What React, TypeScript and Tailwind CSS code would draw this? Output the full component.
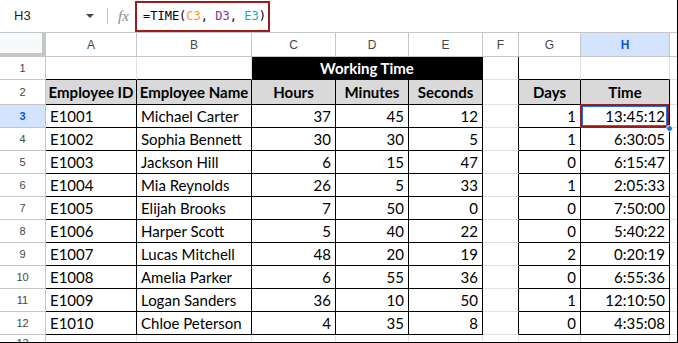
import React from "react";

const data: [string, string, number, number, number, number, string][] = [
  ["E1001", "Michael Carter", 37, 45, 12, 1, "13:45:12"],
  ["E1002", "Sophia Bennett", 30, 30, 5, 1, "6:30:05"],
  ["E1003", "Jackson Hill", 6, 15, 47, 0, "6:15:47"],
  ["E1004", "Mia Reynolds", 26, 5, 33, 1, "2:05:33"],
  ["E1005", "Elijah Brooks", 7, 50, 0, 0, "7:50:00"],
  ["E1006", "Harper Scott", 5, 40, 22, 0, "5:40:22"],
  ["E1007", "Lucas Mitchell", 48, 20, 19, 2, "0:20:19"],
  ["E1008", "Amelia Parker", 6, 55, 36, 0, "6:55:36"],
  ["E1009", "Logan Sanders", 36, 10, 50, 1, "12:10:50"],
  ["E1010", "Chloe Peterson", 4, 35, 8, 0, "4:35:08"],
];

const cols = ["A", "B", "C", "D", "E", "F", "G", "H", ""];

const G = "border-r border-b border-r-[#e1e1e1] border-b-[#e1e1e1]";
const BB = "border-r border-b border-r-black border-b-black";
const GB = "border-r border-b border-r-[#e1e1e1] border-b-black";
const BG = "border-r border-b border-r-black border-b-[#e1e1e1]";

function RowHead({ n, active }: { n: string; active?: boolean }) {
  return (
    <div
      className={
        "flex items-center justify-center border-r border-b border-[#c4c7c5] text-[11px] font-['Liberation_Sans',Arial,sans-serif] " +
        (active ? "bg-[#d3e3fd] text-[#0b57d0] font-bold" : "bg-white text-[#444746]")
      }
    >
      {n}
    </div>
  );
}

function Cell({
  b,
  children,
  align = "left",
  bold,
  bg,
}: {
  b: string;
  children?: React.ReactNode;
  align?: "left" | "right" | "center";
  bold?: boolean;
  bg?: string;
}) {
  const a = align === "right" ? "justify-end" : align === "center" ? "justify-center" : "justify-start";
  return (
    <div
      className={
        "flex items-center px-[4px] overflow-hidden whitespace-nowrap text-[15px] text-black font-['Lato',sans-serif] " +
        a +
        " " +
        b +
        " " +
        (bold ? "font-bold " : "") +
        (bg ?? "bg-white")
      }
    >
      {children}
    </div>
  );
}

export default function App() {
  return (
    <div className="w-[678px] h-[343px] bg-white border-r border-b border-black overflow-hidden flex flex-col">
      {/* formula bar */}
      <div className="h-[33px] shrink-0 flex items-center border-b border-[#c4c7c5] bg-white font-['Liberation_Sans',Arial,sans-serif]">
        <div className="w-[86px] pl-[14px] text-[13px] text-[#1f1f1f]">H3</div>
        <svg width="8" height="4" viewBox="0 0 8 4" className="ml-[0px]">
          <path d="M0 0 L8 0 L4 4 Z" fill="#444746" />
        </svg>
        <div className="ml-[13px] w-px h-[16px] bg-[#c4c7c5]" />
        <div className="ml-[10px] w-[16px] text-[15px] italic text-[#8b8b8b] font-['Liberation_Serif',serif]">fx</div>
        <div className="ml-[1px] h-[31px] w-[135px] border-2 border-[#9e1b1b] flex items-center pl-[6px] text-[12px] font-['DejaVu_Sans_Mono',monospace] whitespace-pre">
          <span className="text-black">=TIME(</span>
          <span className="text-[#f7981d]">C3</span>
          <span className="text-black">, </span>
          <span className="text-[#7e3794]">D3</span>
          <span className="text-black">, </span>
          <span className="text-[#11a9cc]">E3</span>
          <span className="text-black">)</span>
        </div>
      </div>

      {/* grid */}
      <div className="grid grid-cols-[46px_91px_115px_84px_73px_74px_36px_62px_89px_1fr] grid-rows-[24px_23px_25px_repeat(10,23px)_1fr] flex-1">
        {/* column header */}
        <div className="bg-[#f8f9fa] border-r-4 border-b-4 border-[#c4c7c5]" />
        {cols.map((c, i) => (
          <div
            key={i}
            className={
              "flex items-center justify-center border-r border-b border-[#c4c7c5] text-[12px] font-['Liberation_Sans',Arial,sans-serif] " +
              (c === "H" ? "bg-[#d3e3fd] text-[#0b57d0] font-bold" : "bg-white text-[#444746]")
            }
          >
            {c}
          </div>
        ))}

        {/* row 1 */}
        <RowHead n="1" />
        <Cell b={GB} />
        <Cell b={GB} />
        <div className="col-span-3 flex items-center justify-center bg-black text-white font-bold text-[15px] font-['Lato',sans-serif] border-r border-b border-black">
          Working Time
        </div>
        <Cell b={BG} />
        <Cell b={GB} />
        <Cell b={GB} />
        <Cell b={G} />

        {/* row 2 */}
        <RowHead n="2" />
        {["Employee ID", "Employee Name", "Hours", "Minutes", "Seconds"].map((h) => (
          <Cell key={h} b={BB} bold align="center" bg="bg-[#d9d9d9]">
            {h}
          </Cell>
        ))}
        <Cell b={BG} />
        <Cell b={BB} bold align="center" bg="bg-[#d9d9d9]">
          Days
        </Cell>
        <Cell b={BB} bold align="center" bg="bg-[#d9d9d9]">
          Time
        </Cell>
        <Cell b={G} />

        {/* data rows */}
        {data.map((r, i) => (
          <React.Fragment key={r[0]}>
            <RowHead n={String(i + 3)} active={i === 0} />
            <Cell b={BB}>{r[0]}</Cell>
            <Cell b={BB}>{r[1]}</Cell>
            <Cell b={BB} align="right">{r[2]}</Cell>
            <Cell b={BB} align="right">{r[3]}</Cell>
            <Cell b={BB} align="right">{r[4]}</Cell>
            <Cell b={i === 9 ? BG : BG} />
            <Cell b={BB} align="right">{r[5]}</Cell>
            {i === 0 ? (
              <div className="relative flex items-center justify-end px-[4px] text-[15px] text-black font-['Lato',sans-serif] bg-white border-r border-b border-black">
                13:45:12
                <div className="absolute -left-[1px] -top-[1px] right-[0px] bottom-[-1px] border-2 border-[#9e1b1b]" />
                <div className="absolute left-[1px] top-[1px] right-[2px] bottom-[1px] border border-[#1a73e8]" />
                <div className="absolute right-[-4px] bottom-[-5px] w-[7px] h-[7px] rounded-full bg-[#1a73e8] border border-white" />
              </div>
            ) : (
              <Cell b={BB} align="right">{r[6]}</Cell>
            )}
            <Cell b={G} />
          </React.Fragment>
        ))}

        {/* row 13 */}
        <RowHead n="13" />
        {cols.map((_, i) => (
          <Cell key={i} b={G} />
        ))}
      </div>
    </div>
  );
}
